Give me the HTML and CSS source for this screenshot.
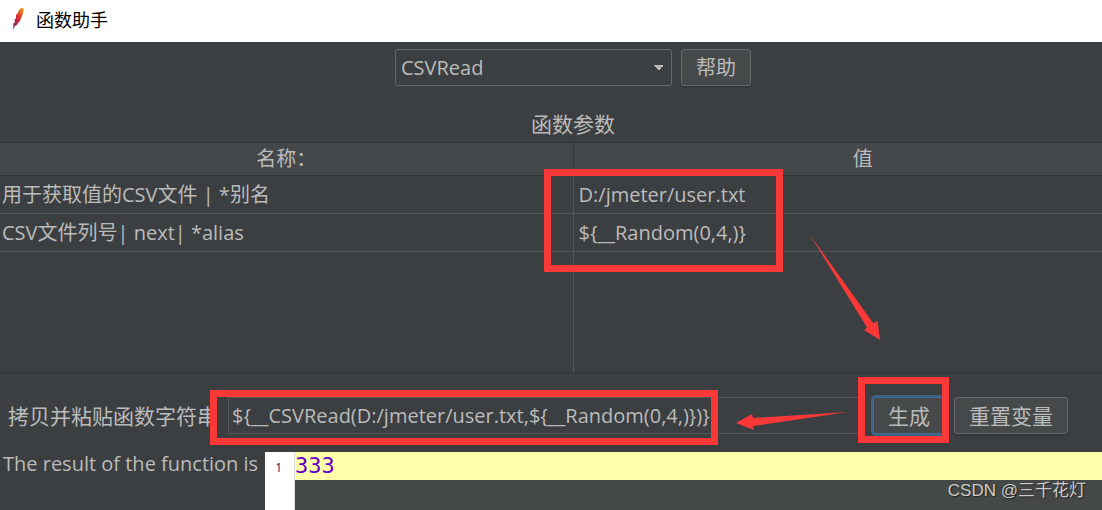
FILE: index.html
```html
<!DOCTYPE html>
<html lang="zh-CN">
<head>
<meta charset="utf-8">
<title>函数助手</title>
<meta name="viewport" content="width=device-width, initial-scale=1">
<link rel="stylesheet" href="styles.css">
</head>
<body>
<div class="window">
  <header class="titlebar">
    <svg class="feather" viewBox="0 0 16 24" aria-hidden="true">
      <defs>
        <linearGradient id="plume" x1="0.8" y1="0" x2="0.2" y2="1">
          <stop offset="0" stop-color="#f59a1b"/>
          <stop offset="0.3" stop-color="#e0442a"/>
          <stop offset="0.6" stop-color="#c91f3f"/>
          <stop offset="1" stop-color="#6e2a83"/>
        </linearGradient>
      </defs>
      <path d="M11 1 L13 1 L14 3 L13 5 L12.500 8 L11 11 L10 14 L8 16 L7 18 L5 19 L4 21 L2.500 23 L3.500 19 L3 17 L5 15 L4.500 13 L6 11 L6 8 L8 6 L9 3 Z" fill="url(#plume)"/>
    </svg>
    <h1 class="title">函数助手</h1>
  </header>
  <main class="dialog">
    <div class="chooser">
      <select class="function-select" aria-label="函数"><option>CSVRead</option></select>
      <button class="button" type="button">帮助</button>
    </div>
    <h2 class="caption">函数参数</h2>
    <table class="params">
      <thead>
        <tr><th class="name-col">名称：</th><th class="value-col">值</th></tr>
      </thead>
      <tbody>
        <tr><td>用于获取值的CSV文件 | *别名</td><td>D:/jmeter/user.txt</td></tr>
        <tr><td>CSV文件列号| next| *alias</td><td>${__Random(0,4,)}</td></tr>
        <tr class="filler"><td></td><td></td></tr>
      </tbody>
    </table>
    <div class="generate">
      <label class="generate-label" for="function-string">拷贝并粘贴函数字符串</label>
      <input class="function-string" id="function-string" type="text" value="${__CSVRead(D:/jmeter/user.txt,${__Random(0,4,)})}">
      <button class="button focused" type="button">生成</button>
      <button class="button" type="button">重置变量</button>
    </div>
    <div class="result">
      <span class="result-label">The result of the function is</span>
      <div class="editor">
        <div class="gutter">1</div>
        <div class="code"><div class="code-line">333</div></div>
      </div>
    </div>
  </main>
  <svg class="annotations" width="1102" height="510" viewBox="0 0 1102 510" aria-hidden="true">
    <g fill="none" stroke="#fb3838" stroke-width="7">
      <rect x="547.500" y="172.500" width="232" height="96"/>
      <rect x="213.500" y="393.500" width="501" height="48"/>
      <rect x="861.500" y="380.500" width="84" height="59"/>
    </g>
    <g fill="#fb3838">
      <path d="M810 235 L873.500 323.500 L877.500 321 L880 340 L864 330 L867 327.500 Z"/>
      <path d="M848 412 L753 426 L754 430 L736 423 L752 414 L753 418 Z"/>
    </g>
  </svg>
  <div class="watermark">CSDN @三千花灯</div>
</div>
</body>
</html>
```
FILE: styles.css
```css
* { box-sizing: border-box; }

body {
  margin: 0;
  background: #3c3f41;
  color: #bbbbbb;
  font-family: "Open Sans", "Noto Sans CJK SC", sans-serif;
  font-size: 20px;
  line-height: 28px;
}

.window {
  position: relative;
  display: flex;
  flex-direction: column;
  min-height: 100vh;
  overflow: hidden;
}

.titlebar {
  display: flex;
  align-items: center;
  gap: 10px;
  height: 42px;
  padding: 0 10px 4px;
  background: #ffffff;
  color: #000000;
}

.feather { width: 16px; height: 24px; }

.title {
  margin: 0;
  font-family: "Noto Sans CJK SC", sans-serif;
  font-size: 18px;
  font-weight: 400;
}

.dialog {
  display: flex;
  flex: 1;
  flex-direction: column;
}

.chooser {
  display: flex;
  justify-content: center;
  gap: 9px;
  padding: 7px 0 0 44px;
}

.function-select,
.button,
.function-string {
  height: 37px;
  border: 1px solid #646869;
  color: inherit;
  font: inherit;
}

.function-select {
  width: 277px;
  padding: 0 5px;
  appearance: none;
  border-radius: 3px;
  background-color: #3c3f41;
  background-image:
    linear-gradient(to top right, transparent 50%, #bbbbbb 50%),
    linear-gradient(to top left, transparent 50%, #bbbbbb 50%);
  background-position: right 12px center, right 7px center;
  background-repeat: no-repeat;
  background-size: 5px 5px;
}

.button {
  padding: 0 14px;
  border-radius: 3px;
  background: #45494a;
  box-shadow: 0 2px 0 #36393b;
  white-space: nowrap;
}

.generate .button { font-size: 21px; }

.focused {
  border-color: #466d94;
  box-shadow: 0 0 0 2px #3d6185;
}

.caption {
  margin: 24px 0 4px;
  padding-left: 44px;
  text-align: center;
  font-size: 21px;
  font-weight: 400;
}

.params {
  width: 100%;
  table-layout: fixed;
  border-collapse: collapse;
  border-bottom: 1px solid #323537;
}

.params th {
  height: 33px;
  padding: 0;
  border-top: 1px solid #323537;
  border-bottom: 1px solid #323537;
  background: #45484a;
  font-weight: 400;
}

.params .name-col {
  width: 52%;
  border-right: 1px solid #323537;
}

.params .value-col { padding-left: 50px; }

.params td {
  height: 38px;
  padding: 0 2px;
  border-bottom: 1px solid #525658;
}

.params td + td {
  padding-left: 5px;
  border-left: 1px solid #525658;
}

.params .filler td {
  height: 121px;
  border-bottom: 0;
}

.generate {
  display: flex;
  align-items: center;
  gap: 9px;
  padding: 24px 34px 18px 8px;
}

.generate-label {
  width: 211px;
  font-size: 21px;
  white-space: nowrap;
}

.function-string {
  flex: 1;
  min-width: 0;
  padding: 0 3px;
  border-color: #53575a;
  background: #3c3f41;
}

.result {
  display: flex;
  flex: 1;
  min-height: 58px;
  padding-left: 3px;
}

.result-label {
  width: 262px;
  line-height: 24px;
  white-space: nowrap;
}

.editor {
  display: flex;
  flex: 1;
  background: #444847;
}

.gutter {
  width: 30px;
  padding: 2px 12px 0 0;
  border-right: 1px solid #dddddd;
  background: #ffffff;
  color: #20206a;
  font-size: 12px;
  text-align: right;
}

.code { flex: 1; }

.code-line {
  background: #ffffaa;
  color: #6400c8;
  font-family: "DejaVu Sans Mono", monospace;
  font-size: 22px;
  line-height: 28px;
}

.annotations {
  position: absolute;
  top: 0;
  left: 0;
  pointer-events: none;
}

.watermark {
  position: absolute;
  right: 16px;
  bottom: 5px;
  color: #cccccc;
  font-family: "Liberation Sans", "Noto Sans CJK SC", sans-serif;
  font-size: 17px;
  text-shadow: 1px 1px 1px #222222;
}
```
